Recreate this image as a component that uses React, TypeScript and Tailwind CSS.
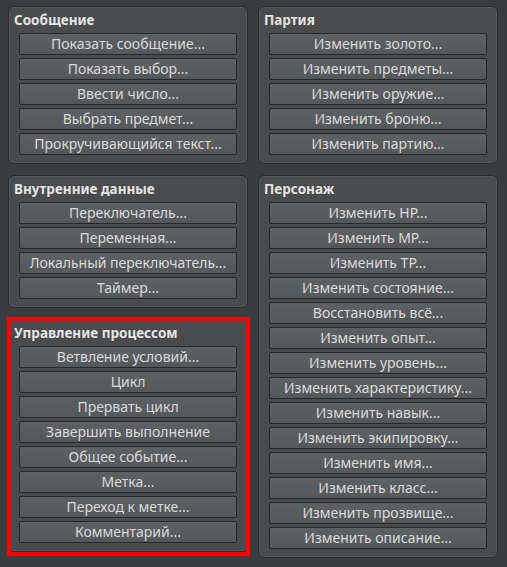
const groups = {
  message: {
    title: 'Сообщение',
    items: [
      'Показать сообщение...',
      'Показать выбор...',
      'Ввести число...',
      'Выбрать предмет...',
      'Прокручивающийся текст...',
    ],
  },
  data: {
    title: 'Внутренние данные',
    items: ['Переключатель...', 'Переменная...', 'Локальный переключатель...', 'Таймер...'],
  },
  flow: {
    title: 'Управление процессом',
    items: [
      'Ветвление условий...',
      'Цикл',
      'Прервать цикл',
      'Завершить выполнение',
      'Общее событие...',
      'Метка...',
      'Переход к метке...',
      'Комментарий...',
    ],
  },
  party: {
    title: 'Партия',
    items: [
      'Изменить золото...',
      'Изменить предметы...',
      'Изменить оружие...',
      'Изменить броню...',
      'Изменить партию...',
    ],
  },
  actor: {
    title: 'Персонаж',
    items: [
      'Изменить HP...',
      'Изменить MP...',
      'Изменить TP...',
      'Изменить состояние...',
      'Восстановить всё...',
      'Изменить опыт...',
      'Изменить уровень...',
      'Изменить характеристику...',
      'Изменить навык...',
      'Изменить экипировку...',
      'Изменить имя...',
      'Изменить класс...',
      'Изменить прозвище...',
      'Изменить описание...',
    ],
  },
}

type Group = { title: string; items: string[] }

function Panel({ group }: { group: Group }) {
  return (
    <div className="flex flex-col rounded-[6px] border border-[#2a2c2e] bg-[#494b4d] shadow-[inset_0_0_0_1px_#55575a]">
      <div className="h-[26px] pl-[5px] pt-[5px] text-[13.5px] font-bold leading-[16px] text-[#e4e4e4]">
        {group.title}
      </div>
      <div className="flex flex-col gap-[3px] px-[10px] pb-[8px]">
        {group.items.map((item) => (
          <button
            key={item}
            type="button"
            className="flex h-[22px] items-center justify-center rounded-[2px] border border-[#26282a] bg-gradient-to-b from-[#5e6164] to-[#55585b] pb-[1px] text-[14px] leading-none text-[#dadada]"
          >
            {item}
          </button>
        ))}
      </div>
    </div>
  )
}

export default function App() {
  return (
    <div
      className="h-[567px] w-[507px] bg-[#3a3d40] pl-[8px] pt-[6px]"
      style={{ fontFamily: '"Noto Sans", "DejaVu Sans", sans-serif' }}
    >
      <div className="grid grid-cols-[240px_240px] gap-x-[10px]">
        <div className="flex flex-col gap-[11px]">
          <Panel group={groups.message} />
          <Panel group={groups.data} />
          <div className="relative">
            <Panel group={groups.flow} />
            <div className="pointer-events-none absolute -bottom-[4px] -left-[1px] -right-[2px] -top-[2px] border-4 border-[#ff0000]" />
          </div>
        </div>
        <div className="flex flex-col gap-[11px]">
          <Panel group={groups.party} />
          <Panel group={groups.actor} />
        </div>
      </div>
    </div>
  )
}
